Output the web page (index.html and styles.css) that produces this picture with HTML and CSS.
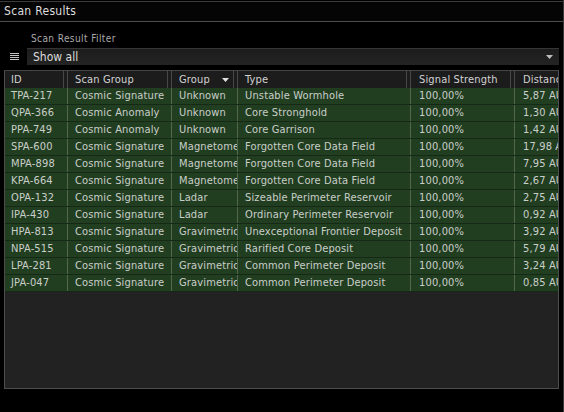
FILE: index.html
```html
<!DOCTYPE html>
<html>
<head>
<meta charset="utf-8">
<link rel="stylesheet" href="styles.css">
</head>
<body>
<div class="window">
  <div class="titlebar">Scan Results</div>
  <div class="filter">
    <div class="filter-label">Scan Result Filter</div>
    <div class="filter-row">
      <svg class="menu-icon" width="9" height="7" viewBox="0 0 9 7"><rect x="0" y="0" width="9" height="1" fill="#c4c4c4"/><rect x="0" y="2" width="9" height="1" fill="#c4c4c4"/><rect x="0" y="4" width="9" height="1" fill="#c4c4c4"/><rect x="0" y="6" width="9" height="1" fill="#c4c4c4"/></svg>
      <div class="dropdown">
        <span>Show all</span>
        <svg class="caret" width="7" height="4" viewBox="0 0 7 4"><polygon points="0,0 7,0 3.5,4" fill="#bdbdbd"/></svg>
      </div>
    </div>
  </div>
  <div class="table">
    <div class="row head">
      <div class="cell">ID</div>
      <div class="cell">Scan Group</div>
      <div class="cell sorted">Group<svg class="sort" width="7" height="4" viewBox="0 0 7 4"><polygon points="0,0 7,0 3.5,4" fill="#e0e0e0"/></svg></div>
      <div class="cell">Type</div>
      <div class="cell">Signal Strength</div>
      <div class="cell">Distance</div>
    </div>
    <div class="row"><div class="cell">TPA-217</div><div class="cell">Cosmic Signature</div><div class="cell">Unknown</div><div class="cell">Unstable Wormhole</div><div class="cell">100,00%</div><div class="cell">5,87 AU</div></div>
    <div class="row"><div class="cell">QPA-366</div><div class="cell">Cosmic Anomaly</div><div class="cell">Unknown</div><div class="cell">Core Stronghold</div><div class="cell">100,00%</div><div class="cell">1,30 AU</div></div>
    <div class="row"><div class="cell">PPA-749</div><div class="cell">Cosmic Anomaly</div><div class="cell">Unknown</div><div class="cell">Core Garrison</div><div class="cell">100,00%</div><div class="cell">1,42 AU</div></div>
    <div class="row"><div class="cell">SPA-600</div><div class="cell">Cosmic Signature</div><div class="cell">Magnetometric</div><div class="cell">Forgotten Core Data Field</div><div class="cell">100,00%</div><div class="cell">17,98 AU</div></div>
    <div class="row"><div class="cell">MPA-898</div><div class="cell">Cosmic Signature</div><div class="cell">Magnetometric</div><div class="cell">Forgotten Core Data Field</div><div class="cell">100,00%</div><div class="cell">7,95 AU</div></div>
    <div class="row"><div class="cell">KPA-664</div><div class="cell">Cosmic Signature</div><div class="cell">Magnetometric</div><div class="cell">Forgotten Core Data Field</div><div class="cell">100,00%</div><div class="cell">2,67 AU</div></div>
    <div class="row"><div class="cell">OPA-132</div><div class="cell">Cosmic Signature</div><div class="cell">Ladar</div><div class="cell">Sizeable Perimeter Reservoir</div><div class="cell">100,00%</div><div class="cell">2,75 AU</div></div>
    <div class="row"><div class="cell">IPA-430</div><div class="cell">Cosmic Signature</div><div class="cell">Ladar</div><div class="cell">Ordinary Perimeter Reservoir</div><div class="cell">100,00%</div><div class="cell">0,92 AU</div></div>
    <div class="row"><div class="cell">HPA-813</div><div class="cell">Cosmic Signature</div><div class="cell">Gravimetric</div><div class="cell">Unexceptional Frontier Deposit</div><div class="cell">100,00%</div><div class="cell">3,92 AU</div></div>
    <div class="row"><div class="cell">NPA-515</div><div class="cell">Cosmic Signature</div><div class="cell">Gravimetric</div><div class="cell">Rarified Core Deposit</div><div class="cell">100,00%</div><div class="cell">5,79 AU</div></div>
    <div class="row"><div class="cell">LPA-281</div><div class="cell">Cosmic Signature</div><div class="cell">Gravimetric</div><div class="cell">Common Perimeter Deposit</div><div class="cell">100,00%</div><div class="cell">3,24 AU</div></div>
    <div class="row"><div class="cell">JPA-047</div><div class="cell">Cosmic Signature</div><div class="cell">Gravimetric</div><div class="cell">Common Perimeter Deposit</div><div class="cell">100,00%</div><div class="cell">0,85 AU</div></div>
  </div>
</div>
</body>
</html>
```
FILE: styles.css
```css
* { box-sizing: border-box; }
html, body {
  margin: 0;
  padding: 0;
  background: #000;
}
body {
  font-family: "DejaVu Sans Condensed", "DejaVu Sans", sans-serif;
  font-stretch: condensed;
  font-feature-settings: "zero" 1;
  color: #c9cec9;
  font-size: 11px;
}
.window {
  width: 564px;
  height: 412px;
  padding-top: 1px;
  border-right: 1px solid #3a3a3a;
  display: flex;
  flex-direction: column;
}
.titlebar {
  height: 21px;
  border-top: 1px solid #3c3c3c;
  border-bottom: 1px solid #4c4c4c;
  background: #050505;
  color: #dedede;
  font-size: 12px;
  line-height: 19px;
  padding-left: 4px;
  letter-spacing: 0.3px;
}
.filter {
  padding-top: 11px;
}
.filter-label {
  font-size: 10px;
  line-height: 12px;
  color: #ababab;
  padding-left: 31px;
  letter-spacing: 0.4px;
  margin-bottom: 3px;
}
.filter-row {
  display: flex;
  align-items: center;
}
.menu-icon {
  margin-left: 10px;
  margin-right: 8px;
  display: block;
}
.dropdown {
  flex: 1;
  margin-right: 4px;
  height: 17px;
  border-top: 1px solid #353535;
  background: linear-gradient(#1c1c1c, #242424);
  display: flex;
  align-items: center;
  justify-content: space-between;
  padding-left: 6px;
  padding-right: 6px;
  font-size: 12px;
  color: #dcdcdc;
}
.caret { display: block; }
.table {
  margin: 5px 4px 0 4px;
  height: 319px;
  border: 1px solid #4e4e4e;
  border-top-color: #454545;
  background: #222222;
  overflow: hidden;
}
.row {
  display: grid;
  grid-template-columns: 63px 104px 66px 173px 104px 1fr;
  height: 17px;
  background: #223e21;
  border-bottom: 1px solid #162816;
}
.cell {
  white-space: nowrap;
  overflow: hidden;
  padding-left: 7px;
  line-height: 16px;
  border-right: 1px solid #55674f;
  letter-spacing: 0.15px;
}
.cell:first-child { padding-left: 6px; }
.cell:last-child { border-right: none; padding-left: 8px; }
.cell:nth-child(5) { padding-left: 8px; }
.row.head {
  background: #1c1c1c;
  border-bottom: none;
  color: #d2d2d2;
}
.head .cell {
  border-right: none;
  line-height: 17px;
  box-shadow: inset -1px 0 0 #484848, inset -4px 0 0 #1c1c1c, inset -5px 0 0 #484848;
}
.head .cell:last-child { box-shadow: none; }
.sorted {
  display: flex;
  align-items: center;
  justify-content: space-between;
  padding-right: 9px;
}
.sort { display: block; }
```
